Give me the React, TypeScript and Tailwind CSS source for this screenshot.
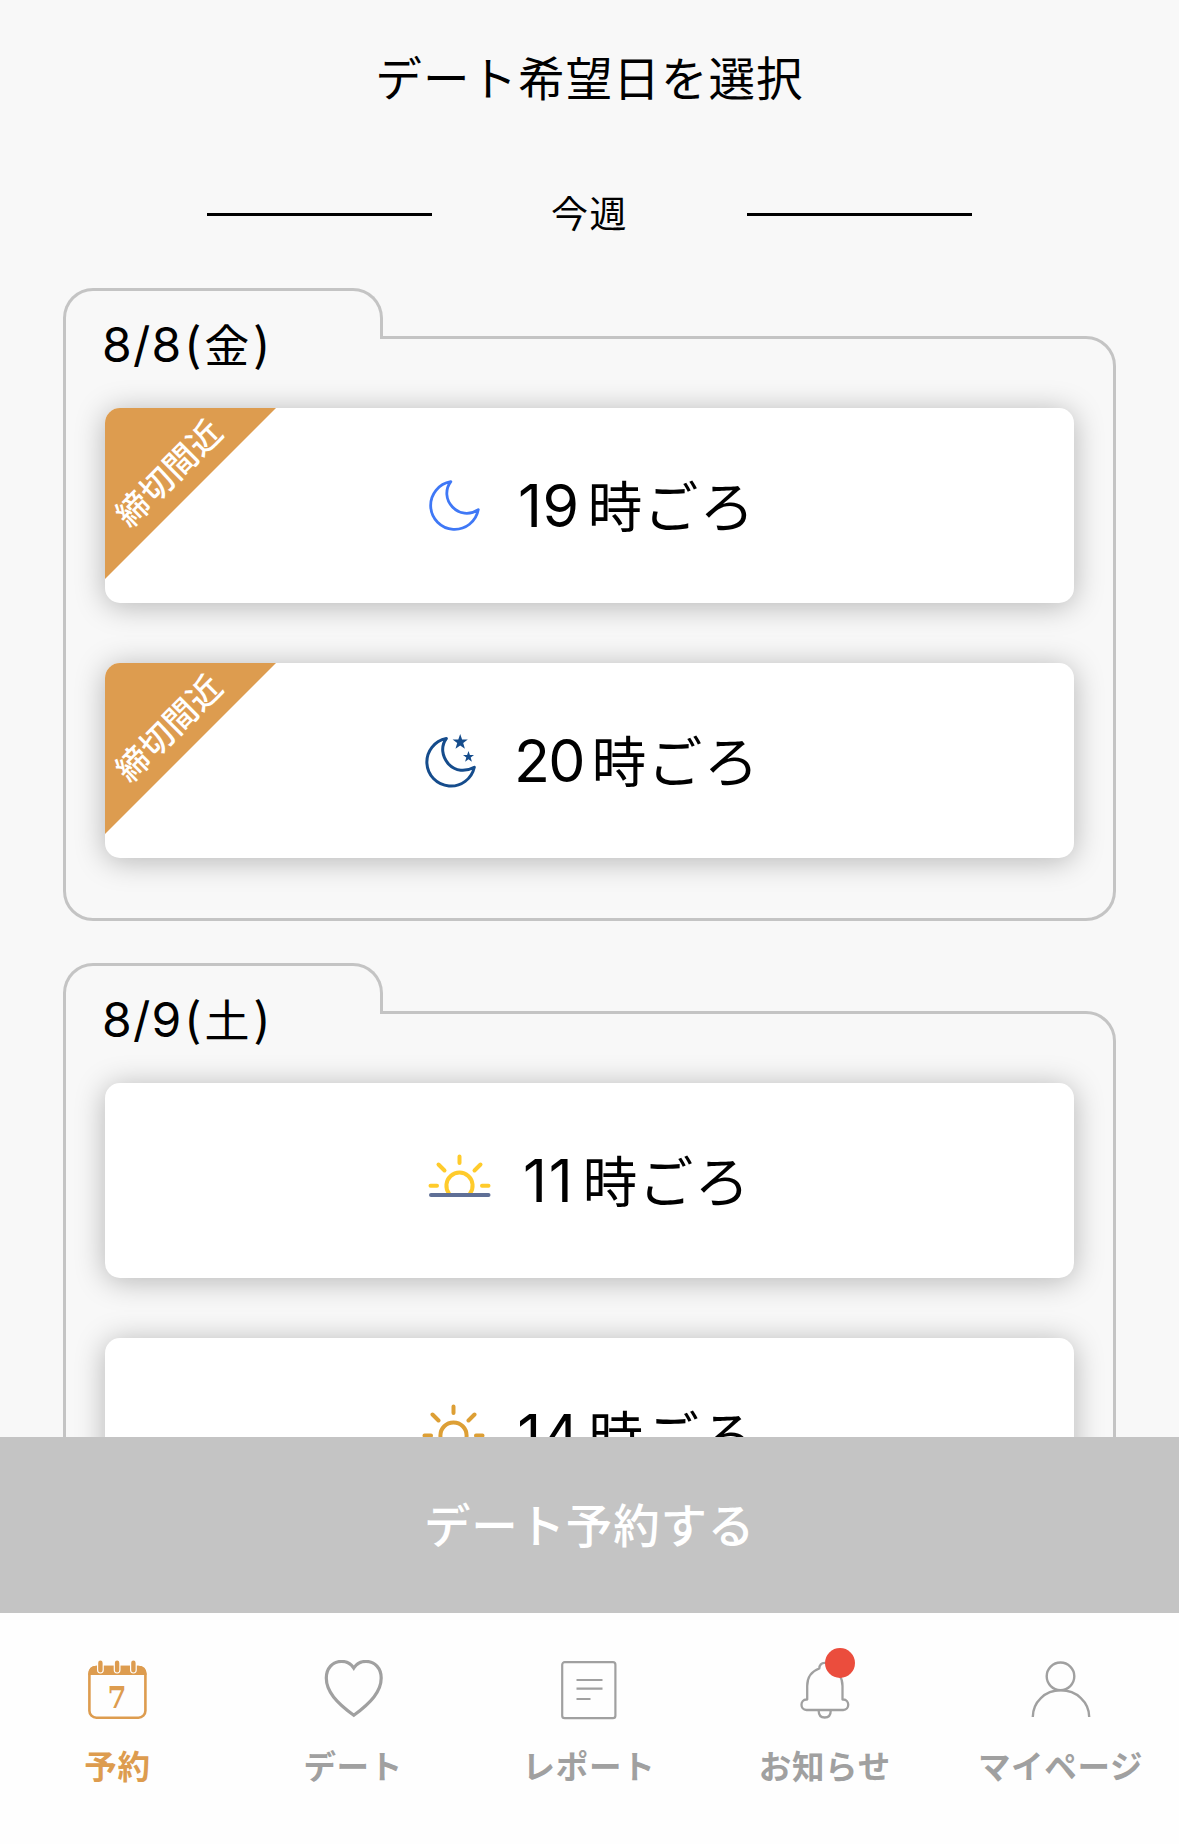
import React from 'react';

type IconName = 'moon' | 'night' | 'sunrise' | 'sun';

interface Slot {
    hour: string;
    icon: IconName;
    tracking: string;
    closing?: boolean;
}

interface Day {
    date: string;
    weekday: string;
    slots: Slot[];
}

const days: Day[] = [
    {
        date: '8/8',
        weekday: '金',
        slots: [
            { hour: '19', icon: 'moon', tracking: 'tracking-[0.5px]', closing: true },
            { hour: '20', icon: 'night', tracking: 'tracking-[-1.7px]', closing: true }
        ]
    },
    {
        date: '8/9',
        weekday: '土',
        slots: [
            { hour: '11', icon: 'sunrise', tracking: 'tracking-[1.8px]' },
            { hour: '14', icon: 'sun', tracking: 'tracking-[0.5px]' }
        ]
    }
];

const MoonIcon = () => (
    <svg width="63" height="51" viewBox="-6.5 0 63 51" fill="none" stroke="#3f78f6" strokeWidth="2.8" strokeLinejoin="round">
        <path d="M21.3 1.7A24 24 0 1 0 48.8 29.6C40 35.6 29.5 34 23 27C16 19.500 15.500 9.500 21.3 1.7Z" />
    </svg>
);

const NightIcon = () => (
    <svg width="63" height="54" viewBox="-6.5 0 63 54" fill="none" stroke="#154c8c" strokeWidth="3" strokeLinejoin="round">
        <path d="M20.800 4.500A24 24 0 1 0 48.8 33.2C40 38 30 37.500 23 30C16.500 22.500 15 12.500 20.800 4.500Z" />
        <g fill="#154c8c" stroke="none">
            <path d="M34.7 0L36.600 5.600H42.300L37.700 9.100L39.400 14.800L34.700 11.400L30 14.800L31.700 9.100L27.100 5.600H32.800Z" />
            <path d="M43 17L44.400 21.100H48.500L45.200 23.600L46.400 27.800L43 25.300L39.600 27.800L40.800 23.600L37.500 21.100H41.600Z" />
        </g>
    </svg>
);

const SunriseIcon = () => (
    <svg width="63" height="53" viewBox="0 0 63 53" fill="none" stroke="#ffcb2b" strokeWidth="4" strokeLinecap="round">
        <path d="M31.500 2.500V9M10.500 10.500L16.500 16.500M52.500 10.500L46.500 16.500M2.500 31.800H9M54 31.800H60.500" />
        <path d="M21 39.500A13.100 13.100 0 1 1 42 39.500" />
        <path stroke="#5f6f96" d="M3 41H60.500" />
    </svg>
);

const SunIcon = () => (
    <svg width="63" height="63" viewBox="0 0 63 63" fill="none" stroke="#dd9f35" strokeWidth="4" strokeLinecap="round">
        <circle cx="31.500" cy="31.500" r="13.100" />
        <path d="M31.500 2.500V9M31.500 54V60.500M10.500 10.500L16.500 16.500M52.500 10.500L46.500 16.500M2.500 31.500H9M54 31.500H60.500M10.500 52.500L16.500 46.500M52.500 52.500L46.500 46.500" />
    </svg>
);

const slotIcons: Record<IconName, React.FC> = {
    moon: MoonIcon,
    night: NightIcon,
    sunrise: SunriseIcon,
    sun: SunIcon
};

const SlotCard: React.FC<{ slot: Slot }> = ({ slot }) => {
    const Icon = slotIcons[slot.icon];

    return (
        <button className="relative flex h-[195px] w-full items-center justify-center rounded-[15px] bg-white shadow-[0_3px_30px_rgba(0,0,0,0.28)]">
            {slot.closing && (
                <>
                    <span className="absolute left-0 top-0 size-[171px] rounded-tl-[15px] bg-[#dd9c4f] [clip-path:polygon(0_0,100%_0,0_100%)]" />
                    <span className="absolute left-[63px] top-[64px] -translate-x-1/2 -translate-y-1/2 -rotate-45 whitespace-nowrap text-[33px] leading-none font-medium tracking-[0.6px] text-white">
                        締切間近
                    </span>
                </>
            )}
            <Icon />
            <span className="ml-[32px] flex items-center whitespace-nowrap leading-none">
                <span className={`font-[Inter] text-[59px] ${slot.tracking}`}>{slot.hour}</span>
                <span className="-mt-[3px] ml-[8px] text-[54.5px] tracking-[1.6px]">時ごろ</span>
            </span>
        </button>
    );
};

const DayFolder: React.FC<{ day: Day }> = ({ day }) => (
    <section>
        {/* Tab */}
        <div className="relative z-10 h-[51px] w-[320px] rounded-t-[30px] border-x-[3px] border-t-[3px] border-[#c4c4c4] bg-[#f8f8f8] pl-[36px] pt-[28px]">
            <h3 className="flex h-[52px] items-center whitespace-nowrap leading-none">
                <span className="font-[Inter] text-[48px] tracking-[1.2px]">{day.date}</span>
                <span className="-mt-[7px] ml-[3px] text-[45px] font-medium tracking-[3px]">(</span>
                <span className="-mt-[4px] text-[45px]">{day.weekday}</span>
                <span className="-mt-[7px] ml-[4px] text-[45px] font-medium">)</span>
            </h3>
        </div>
        {/* Slots */}
        <div className="-mt-[3px] flex flex-col gap-[60px] rounded-b-[30px] rounded-tr-[30px] border-[3px] border-[#c4c4c4] px-[39px] pb-[60px] pt-[69px]">
            {day.slots.map(slot => (
                <SlotCard key={slot.hour} slot={slot} />
            ))}
        </div>
    </section>
);

const CalendarIcon = () => (
    <svg width="60" height="60" viewBox="0.6 0 60 60" fill="none">
        <rect x="2" y="7" width="56" height="50.700" rx="7" stroke="#dd9c4f" strokeWidth="2.600" />
        <path d="M1 15V13.500Q1 5.700 9 5.700H51Q59 5.700 59 13.500V15Z" fill="#dd9c4f" />
        <path d="M13 3V10M29.700 3V10M46 3V10" stroke="#fff" strokeWidth="6.800" strokeLinecap="round" />
        <path d="M13 2.700V10.300M29.700 2.700V10.300M46 2.700V10.300" stroke="#dd9c4f" strokeWidth="4.400" strokeLinecap="round" />
        <text x="20" y="48.300" fontFamily="DejaVu Serif" fontWeight="700" fontSize="29.500" textLength="19" lengthAdjust="spacingAndGlyphs" fill="#dd9c4f">7</text>
    </svg>
);

const HeartIcon = () => (
    <svg width="60" height="60" viewBox="0.5 0.500 60 60" fill="none" stroke="currentColor" strokeWidth="3.200">
        <path d="M30.300 8.500C27 3.500 23 1.900 18 1.900C9 1.900 2.800 9 2.800 18.500C2.800 32 13 43 30.300 55.800C47.500 43 57.700 32 57.700 18.500C57.700 9 51.500 1.900 42.500 1.900C37.500 1.900 33.500 3.500 30.300 8.500Z" />
    </svg>
);

const ReportIcon = () => (
    <svg width="60" height="60" viewBox="0 0 60 60" fill="none" stroke="currentColor" strokeWidth="2.200">
        <rect x="3.200" y="2.200" width="53.200" height="56" rx="2.500" />
        <path d="M17.500 20H43.500M17.500 28.700H43.500M17.500 39H31.500" />
    </svg>
);

const BellIcon = () => (
    <svg width="60" height="60" viewBox="0 0 60 60" fill="none" stroke="currentColor" strokeWidth="2.300" strokeLinejoin="round">
        <path d="M29.700 2.800C26 2.800 24.500 5 24.300 8.500C16 11.500 12.200 18 12.200 26V39.500H11.500C4.800 39.500 4.800 50 11.500 50H48.200C54.900 50 54.900 39.500 48.200 39.500H47.500V26C47.500 18 43.400 11.500 35.100 8.500C34.900 5 33.400 2.800 29.700 2.800Z" />
        <path d="M23.700 51C23.700 55 26 57.500 29.700 57.500C33.400 57.500 35.700 55 35.700 51" />
    </svg>
);

const PersonIcon = () => (
    <svg width="60" height="60" viewBox="0 0 60 60" fill="none" stroke="currentColor" strokeWidth="2.400">
        <circle cx="29.500" cy="16.300" r="13.800" />
        <path d="M1.800 57C1.800 42 14 30.300 29.700 30.300C45.500 30.300 58.200 42 58.200 57" />
    </svg>
);

const navItems: { label: string; Icon: React.FC; active?: boolean; badge?: boolean }[] = [
    { label: '予約', Icon: CalendarIcon, active: true },
    { label: 'デート', Icon: HeartIcon },
    { label: 'レポート', Icon: ReportIcon },
    { label: 'お知らせ', Icon: BellIcon, badge: true },
    { label: 'マイページ', Icon: PersonIcon }
];

export default function App() {
    return (
        <div className="flex h-[1844px] w-[1179px] flex-col overflow-hidden bg-[#f8f8f8] font-['Noto_Sans_CJK_JP',sans-serif] text-black">
            <main className="min-h-0 flex-1 overflow-hidden">
                <h1 className="mt-[52px] text-center text-[46.5px] leading-[48px] tracking-[1.1px]">デート希望日を選択</h1>

                <div className="mt-[89px] flex h-[51px] items-center justify-center">
                    <span className="h-[3px] w-[225px] bg-black" />
                    <h2 className="-mt-[5px] w-[315px] text-center text-[37px] leading-none tracking-[1.6px]">今週</h2>
                    <span className="h-[3px] w-[225px] bg-black" />
                </div>

                <div className="mt-[48px] flex flex-col gap-[42px] px-[63px]">
                    {days.map(day => (
                        <DayFolder key={day.date} day={day} />
                    ))}
                </div>
            </main>

            <button className="h-[176px] shrink-0 bg-[#c4c4c4] pb-[4px] text-[46.5px] leading-none font-medium tracking-[0.8px] text-white">
                デート予約する
            </button>

            <nav className="grid h-[231px] shrink-0 grid-cols-5 bg-[#fefefe] pt-[47px]">
                {navItems.map(({ label, Icon, active, badge }) => (
                    <a key={label} className={`flex flex-col items-center ${active ? 'text-[#dd9c4f]' : 'text-[#a0a0a0]'}`}>
                        <span className="relative">
                            <Icon />
                            {badge && <span className="absolute left-[30px] -top-[12px] size-[30px] rounded-full bg-[#eb4d3d]" />}
                        </span>
                        <span className="mt-[28px] mr-[1px] whitespace-nowrap text-[32.5px] leading-[34px] font-bold tracking-[0.7px]">{label}</span>
                    </a>
                ))}
            </nav>
        </div>
    );
}
